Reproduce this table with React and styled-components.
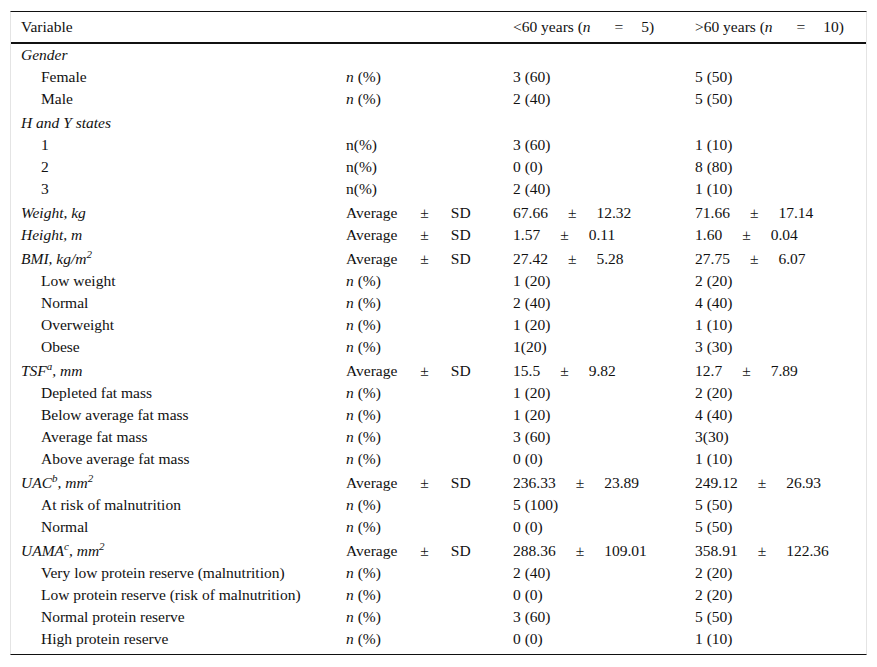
import { Fragment } from 'react'
import styled, { createGlobalStyle } from 'styled-components'

const GlobalStyle = createGlobalStyle`
	body {
		margin: 0;
		padding: 11px 10px 0 10px;
		background: #fff;
		font-family: 'Liberation Serif', 'Times New Roman', serif;
		color: #111;
	}
`

const Frame = styled.div`
	width: 855px;
	border-top: 1px solid #111;
	border-bottom: 1px solid #111;
	border-left: 1px solid #e4e4e4;
	border-right: 1px solid #e4e4e4;
	padding-bottom: 4px;
`

const Table = styled.table`
	width: 100%;
	table-layout: fixed;
	border-collapse: collapse;
	font-size: 15.5px;
	line-height: 18px;

	sup {
		font-size: 11px;
		line-height: 0;
		vertical-align: 6px;
	}
`

const Th = styled.th`
	height: 30px;
	padding: 0 0 0 10px;
	text-align: left;
	font-weight: 400;
	vertical-align: middle;
	border-bottom: 2px solid #111;
	white-space: nowrap;
`

const Row = styled.tr`
	height: ${(p) => (p.$tall ? '24px' : '22px')};

	td {
		padding-top: ${(p) => (p.$tall ? '4px' : '2px')};
		padding-bottom: 2px;
	}
`

const Td = styled.td`
	padding-left: 10px;
	padding-right: 0;
	vertical-align: middle;
	white-space: nowrap;
`

const Label = styled(Td)`
	padding-left: ${(p) => (p.$head ? '10px' : '30px')};
	font-style: ${(p) => (p.$head ? 'italic' : 'normal')};
`

const Em = styled.span`
	font-style: italic;
`

const Pm = styled.span`
	margin: 0 ${(p) => p.$r ?? p.$gap}px 0 ${(p) => p.$gap}px;
`

const N = () => <Em>n</Em>

const nPct = (
	<Fragment>
		<N /> (%)
	</Fragment>
)

const avgSd = (
	<Fragment>
		Average<Pm $gap={23} $r={22}>±</Pm>SD
	</Fragment>
)

const mean = (a, b) => (
	<Fragment>
		{a}
		<Pm $gap={20}>±</Pm>
		{b}
	</Fragment>
)

const rows = [
	{ label: 'Gender', head: true },
	{ label: 'Female', kind: nPct, a: '3 (60)', b: '5 (50)' },
	{ label: 'Male', kind: nPct, a: '2 (40)', b: '5 (50)' },
	{ label: 'H and Y states', head: true, tall: true },
	{ label: '1', kind: 'n(%)', a: '3 (60)', b: '1 (10)' },
	{ label: '2', kind: 'n(%)', a: '0 (0)', b: '8 (80)' },
	{ label: '3', kind: 'n(%)', a: '2 (40)', b: '1 (10)' },
	{ label: 'Weight, kg', head: true, tall: true, kind: avgSd, a: mean('67.66', '12.32'), b: mean('71.66', '17.14') },
	{ label: 'Height, m', head: true, kind: avgSd, a: mean('1.57', '0.11'), b: mean('1.60', '0.04') },
	{
		label: <Fragment>BMI, kg/m<sup>2</sup></Fragment>,
		head: true,
		tall: true,
		kind: avgSd,
		a: mean('27.42', '5.28'),
		b: mean('27.75', '6.07'),
	},
	{ label: 'Low weight', kind: nPct, a: '1 (20)', b: '2 (20)' },
	{ label: 'Normal', kind: nPct, a: '2 (40)', b: '4 (40)' },
	{ label: 'Overweight', kind: nPct, a: '1 (20)', b: '1 (10)' },
	{ label: 'Obese', kind: nPct, a: '1(20)', b: '3 (30)' },
	{
		label: <Fragment>TSF<sup>a</sup>, mm</Fragment>,
		head: true,
		tall: true,
		kind: avgSd,
		a: mean('15.5', '9.82'),
		b: mean('12.7', '7.89'),
	},
	{ label: 'Depleted fat mass', kind: nPct, a: '1 (20)', b: '2 (20)' },
	{ label: 'Below average fat mass', kind: nPct, a: '1 (20)', b: '4 (40)' },
	{ label: 'Average fat mass', kind: nPct, a: '3 (60)', b: '3(30)' },
	{ label: 'Above average fat mass', kind: nPct, a: '0 (0)', b: '1 (10)' },
	{
		label: <Fragment>UAC<sup>b</sup>, mm<sup>2</sup></Fragment>,
		head: true,
		tall: true,
		kind: avgSd,
		a: mean('236.33', '23.89'),
		b: mean('249.12', '26.93'),
	},
	{ label: 'At risk of malnutrition', kind: nPct, a: '5 (100)', b: '5 (50)' },
	{ label: 'Normal', kind: nPct, a: '0 (0)', b: '5 (50)' },
	{
		label: <Fragment>UAMA<sup>c</sup>, mm<sup>2</sup></Fragment>,
		head: true,
		tall: true,
		kind: avgSd,
		a: mean('288.36', '109.01'),
		b: mean('358.91', '122.36'),
	},
	{ label: 'Very low protein reserve (malnutrition)', kind: nPct, a: '2 (40)', b: '2 (20)' },
	{ label: 'Low protein reserve (risk of malnutrition)', kind: nPct, a: '0 (0)', b: '2 (20)' },
	{ label: 'Normal protein reserve', kind: nPct, a: '3 (60)', b: '5 (50)' },
	{ label: 'High protein reserve', kind: nPct, a: '0 (0)', b: '1 (10)' },
]

const App = () => {
	return (
		<Fragment>
			<GlobalStyle />
			<Frame>
				<Table>
					<colgroup>
						<col style={{ width: 325 }} />
						<col style={{ width: 167 }} />
						<col style={{ width: 182 }} />
						<col />
					</colgroup>
					<thead>
						<tr>
							<Th>Variable</Th>
							<Th />
							<Th>
								&lt;60 years (<N />
								<Pm $gap={24} $r={18}>=</Pm>5)
							</Th>
							<Th>
								&gt;60 years (<N />
								<Pm $gap={24} $r={18}>=</Pm>10)
							</Th>
						</tr>
					</thead>
					<tbody>
						{rows.map((row, i) => (
							<Row key={i} $tall={row.tall}>
								<Label $head={row.head}>{row.label}</Label>
								<Td>{row.kind}</Td>
								<Td>{row.a}</Td>
								<Td>{row.b}</Td>
							</Row>
						))}
					</tbody>
				</Table>
			</Frame>
		</Fragment>
	)
}

export default App
